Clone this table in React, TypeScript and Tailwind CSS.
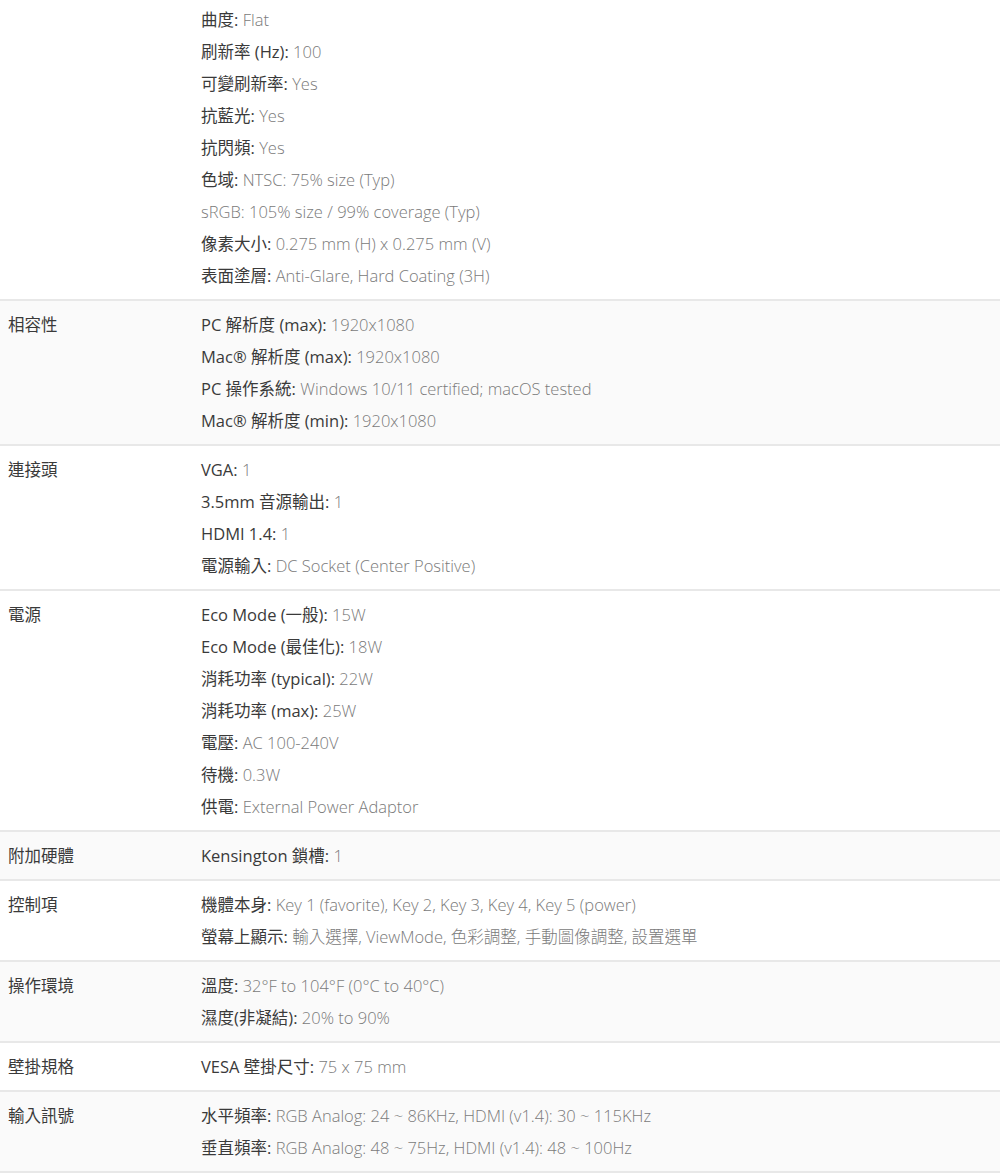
const rows: { label: string; bg: string; first?: boolean; items: [string, string][] }[] = [
  {
    label: "",
    bg: "bg-white",
    first: true,
    items: [
      ["曲度", "Flat"],
      ["刷新率 (Hz)", "100"],
      ["可變刷新率", "Yes"],
      ["抗藍光", "Yes"],
      ["抗閃頻", "Yes"],
      ["色域", "NTSC: 75% size (Typ)"],
      ["", "sRGB: 105% size / 99% coverage (Typ)"],
      ["像素大小", "0.275 mm (H) x 0.275 mm (V)"],
      ["表面塗層", "Anti-Glare, Hard Coating (3H)"],
    ],
  },
  {
    label: "相容性",
    bg: "bg-[#fafafa]",
    items: [
      ["PC 解析度 (max)", "1920x1080"],
      ["Mac® 解析度 (max)", "1920x1080"],
      ["PC 操作系統", "Windows 10/11 certified; macOS tested"],
      ["Mac® 解析度 (min)", "1920x1080"],
    ],
  },
  {
    label: "連接頭",
    bg: "bg-white",
    items: [
      ["VGA", "1"],
      ["3.5mm 音源輸出", "1"],
      ["HDMI 1.4", "1"],
      ["電源輸入", "DC Socket (Center Positive)"],
    ],
  },
  {
    label: "電源",
    bg: "bg-white",
    items: [
      ["Eco Mode (一般)", "15W"],
      ["Eco Mode (最佳化)", "18W"],
      ["消耗功率 (typical)", "22W"],
      ["消耗功率 (max)", "25W"],
      ["電壓", "AC 100-240V"],
      ["待機", "0.3W"],
      ["供電", "External Power Adaptor"],
    ],
  },
  {
    label: "附加硬體",
    bg: "bg-[#fafafa]",
    items: [["Kensington 鎖槽", "1"]],
  },
  {
    label: "控制項",
    bg: "bg-white",
    items: [
      ["機體本身", "Key 1 (favorite), Key 2, Key 3, Key 4, Key 5 (power)"],
      ["螢幕上顯示", "輸入選擇, ViewMode, 色彩調整, 手動圖像調整, 設置選單"],
    ],
  },
  {
    label: "操作環境",
    bg: "bg-[#fafafa]",
    items: [
      ["溫度", "32°F to 104°F (0°C to 40°C)"],
      ["濕度(非凝結)", "20% to 90%"],
    ],
  },
  {
    label: "壁掛規格",
    bg: "bg-white",
    items: [["VESA 壁掛尺寸", "75 x 75 mm"]],
  },
  {
    label: "輸入訊號",
    bg: "bg-[#fafafa]",
    items: [
      ["水平頻率", "RGB Analog: 24 ~ 86KHz, HDMI (v1.4): 30 ~ 115KHz"],
      ["垂直頻率", "RGB Analog: 48 ~ 75Hz, HDMI (v1.4): 48 ~ 100Hz"],
    ],
  },
];

export default function App() {
  return (
    <div className="min-h-[1175px] w-[1000px] bg-white font-['Open_Sans','Noto_Sans_CJK_TC',sans-serif] text-[16.5px] text-[#3a3a3a]">
      {rows.map((row, i) => (
        <div
          key={i}
          className={`flex border-b-2 border-[#e8e8e8] ${row.bg} ${row.first ? "pt-1" : "pt-2"} pb-[7px]`}
        >
          <div className="w-[201px] shrink-0 pl-2 leading-[32px]">{row.label}</div>
          <div className="flex-1">
            {row.items.map(([k, v], j) => (
              <div key={j} className="leading-[32px]">
                {k ? <span>{k}: </span> : null}
                <span className="font-light text-[#7a7a7a]">{v}</span>
              </div>
            ))}
          </div>
        </div>
      ))}
    </div>
  );
}
